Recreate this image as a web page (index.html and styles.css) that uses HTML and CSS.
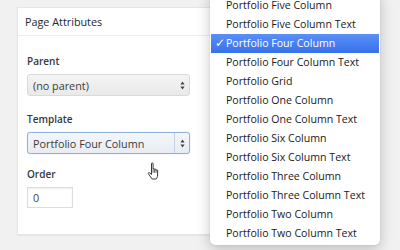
FILE: index.html
```html
<!DOCTYPE html>
<html lang="en">
<head>
  <meta charset="UTF-8">
  <meta name="viewport" content="width=device-width, initial-scale=1.0">
  <title>Page Attributes</title>
  <link rel="stylesheet" href="styles.css">
</head>
<body>
  <div id="screen">
    <div class="panel">
      <div class="panel-header">Page Attributes</div>
      <div class="panel-body">
        <div class="field">
          <p class="field-label">Parent</p>
          <div class="select">
            <span class="select-value">(no parent)</span>
            <span class="select-arrows">
              <svg width="5" height="9" viewBox="0 0 5 9"><path d="M2.5 0.5 L4.6 3.4 H0.4 Z M2.5 8.5 L4.6 5.6 H0.4 Z" fill="#444"/></svg>
            </span>
          </div>
        </div>
        <div class="field">
          <p class="field-label">Template</p>
          <div class="select is-focused">
            <span class="select-value">Portfolio Four Column</span>
            <span class="select-arrows">
              <svg width="5" height="9" viewBox="0 0 5 9"><path d="M2.5 0.5 L4.6 3.4 H0.4 Z M2.5 8.5 L4.6 5.6 H0.4 Z" fill="#444"/></svg>
            </span>
          </div>
        </div>
        <div class="field">
          <p class="field-label">Order</p>
          <div class="text-input">0</div>
        </div>
      </div>
    </div>

    <ul class="dropdown">
      <li>Portfolio Five Column</li>
      <li>Portfolio Five Column Text</li>
      <li class="selected"><span class="check">✓</span>Portfolio Four Column</li>
      <li>Portfolio Four Column Text</li>
      <li>Portfolio Grid</li>
      <li>Portfolio One Column</li>
      <li>Portfolio One Column Text</li>
      <li>Portfolio Six Column</li>
      <li>Portfolio Six Column Text</li>
      <li>Portfolio Three Column</li>
      <li>Portfolio Three Column Text</li>
      <li>Portfolio Two Column</li>
      <li>Portfolio Two Column Text</li>
    </ul>

    <!-- mouse pointer over the template select -->
    <svg class="cursor" width="12" height="18" viewBox="0 0 11 18">
      <path d="M4 1.6 C4 0.6 5.6 0.6 5.6 1.6 V7.2 C5.6 6.4 7.1 6.4 7.1 7.2 V7.8 C7.1 7 8.6 7 8.6 7.8 V8.4 C8.6 7.6 10.1 7.6 10.1 8.4 V13 C10.1 14.8 9.4 16 8.6 17 H4.6 C3.8 16 2.8 14.6 1.6 12.8 L0.9 11.7 C0.4 10.9 1.4 10.1 2.1 10.8 L4 12.5 Z" fill="#fff" stroke="#222" stroke-width="0.9" stroke-linejoin="round"/>
      <path d="M5.6 7.6 V10.8 M7.1 8 V10.8 M8.6 8.6 V10.8" stroke="#222" stroke-width="0.7"/>
    </svg>
  </div>
</body>
</html>
```

FILE: styles.css
```css
body {
  margin: 0;
  background-color: #f1f1f1;
  font-family: 'Open Sans', 'Liberation Sans', sans-serif;
  color: #32373c;
}

#screen {
  position: relative;
  width: 400px;
  height: 250px;
  overflow: hidden;
  padding: 7px 0 0 17px;
  box-sizing: border-box;
}

.panel {
  width: 230px;
  background-color: #fff;
  border: 1px solid #e5e5e5;
  box-shadow: 0 1px 1px rgba(0, 0, 0, 0.04);
}

.panel-header {
  height: 27px;
  line-height: 27px;
  padding: 0 7px;
  font-size: 10.8px;
  color: #23282d;
  border-bottom: 1px solid #eee;
}

.panel-body {
  padding: 18px 9px 26px;
}

.field {
  margin-bottom: 16px;
}

.field:last-child {
  margin-bottom: 0;
}

.field-label {
  margin: 0 0 6px;
  font-size: 10px;
  font-weight: 600;
  line-height: 14px;
  color: #32373c;
}

.select {
  display: flex;
  align-items: center;
  width: 163px;
  height: 22px;
  box-sizing: border-box;
  border: 1px solid #dadada;
  border-radius: 3px;
  background: linear-gradient(#f4f4f4, #e9e9e9);
  font-size: 10.8px;
  color: #3a3a3a;
}

.select.is-focused {
  margin-top: 3px;
  margin-bottom: -3px;
  border-color: #8fb2d8;
  background: linear-gradient(#f4f6f9, #e8ecf1);
  box-shadow: 0 0 1px rgba(70, 130, 200, 0.5);
}

.select-value {
  flex: 1;
  padding-left: 5px;
}

.select-arrows {
  display: flex;
  align-items: center;
  justify-content: center;
  width: 14px;
  height: 100%;
}

.select.is-focused .select-arrows {
  border-left: 1px solid #c3d0df;
}

.text-input {
  width: 46px;
  height: 21px;
  line-height: 19px;
  box-sizing: border-box;
  border: 1px solid #ddd;
  padding-left: 5px;
  font-size: 10.8px;
  color: #444;
  box-shadow: inset 0 1px 2px rgba(0, 0, 0, 0.07);
}

.dropdown {
  position: absolute;
  left: 210px;
  top: -7px;
  width: 170px;
  margin: 0;
  padding: 3px 0 2px;
  list-style: none;
  background-color: #fff;
  border-radius: 0 0 5px 5px;
  box-shadow: 0 4px 14px rgba(0, 0, 0, 0.22), 0 0 1px rgba(0, 0, 0, 0.25);
  font-size: 10.6px;
  color: #1a1a1a;
}

.dropdown li {
  height: 19px;
  line-height: 19px;
  padding-left: 16px;
  position: relative;
}

.dropdown li.selected {
  margin: 0 1px;
  padding-left: 15px;
  color: #fff;
  background: linear-gradient(#5a8ff6, #3871ea);
}

.check {
  position: absolute;
  left: 4px;
  top: 0;
  font-family: 'DejaVu Sans', sans-serif;
  font-size: 12px;
  font-weight: bold;
}

.cursor {
  position: absolute;
  left: 147px;
  top: 162px;
}
```
